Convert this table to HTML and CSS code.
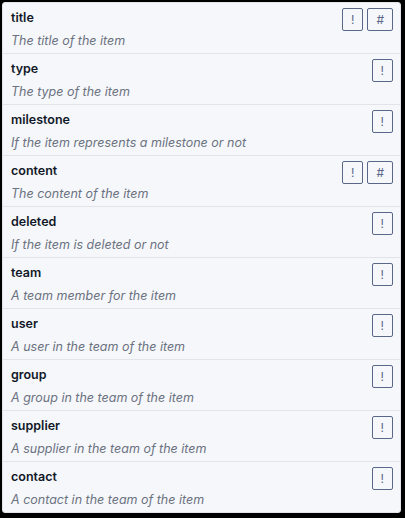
FILE: index.html
```html
<!DOCTYPE html>
<html>
<head>
<meta charset="utf-8">
<link rel="stylesheet" href="styles.css">
</head>
<body>
<div class="card">
  <div class="row"><div class="info"><div class="name">title</div><div class="desc">The title of the item</div></div><div class="tags"><span class="tag">!</span><span class="tag">#</span></div></div>
  <div class="row"><div class="info"><div class="name">type</div><div class="desc">The type of the item</div></div><div class="tags"><span class="tag">!</span></div></div>
  <div class="row"><div class="info"><div class="name">milestone</div><div class="desc">If the item represents a milestone or not</div></div><div class="tags"><span class="tag">!</span></div></div>
  <div class="row"><div class="info"><div class="name">content</div><div class="desc">The content of the item</div></div><div class="tags"><span class="tag">!</span><span class="tag">#</span></div></div>
  <div class="row"><div class="info"><div class="name">deleted</div><div class="desc">If the item is deleted or not</div></div><div class="tags"><span class="tag">!</span></div></div>
  <div class="row"><div class="info"><div class="name">team</div><div class="desc">A team member for the item</div></div><div class="tags"><span class="tag">!</span></div></div>
  <div class="row"><div class="info"><div class="name">user</div><div class="desc">A user in the team of the item</div></div><div class="tags"><span class="tag">!</span></div></div>
  <div class="row"><div class="info"><div class="name">group</div><div class="desc">A group in the team of the item</div></div><div class="tags"><span class="tag">!</span></div></div>
  <div class="row"><div class="info"><div class="name">supplier</div><div class="desc">A supplier in the team of the item</div></div><div class="tags"><span class="tag">!</span></div></div>
  <div class="row"><div class="info"><div class="name">contact</div><div class="desc">A contact in the team of the item</div></div><div class="tags"><span class="tag">!</span></div></div>
</div>
</body>
</html>
```
FILE: styles.css
```css
html, body {
  margin: 0;
  padding: 0;
  background: #000;
  height: 100%;
}
body {
  padding: 2px 4px 5px 2px;
  box-sizing: border-box;
  font-family: Inter, "Noto Sans", sans-serif;
}
.card {
  background: #f6f7fb;
  border: 1px solid #e2e4ea;
  border-radius: 3px;
  height: 100%;
  box-sizing: border-box;
  display: flex;
  flex-direction: column;
}
.row {
  flex: 1;
  display: flex;
  justify-content: space-between;
  align-items: flex-start;
  padding: 5px 7px 0 8px;
  border-bottom: 1px solid #e2e4ea;
}
.row:last-child {
  border-bottom: none;
}
.name {
  font-size: 12.5px;
  font-weight: 600;
  color: #111827;
  line-height: 20px;
}
.desc {
  margin-top: 3px;
  font-size: 12.5px;
  font-style: italic;
  color: #6b7280;
  line-height: 20px;
}
.tags {
  display: flex;
  gap: 4px;
}
.tag {
  height: 23px;
  box-sizing: border-box;
  padding: 0 8px;
  border: 1px solid #5b6788;
  border-radius: 2px;
  display: flex;
  align-items: center;
  justify-content: center;
  font-size: 12px;
  color: #5b6788;
}
```
